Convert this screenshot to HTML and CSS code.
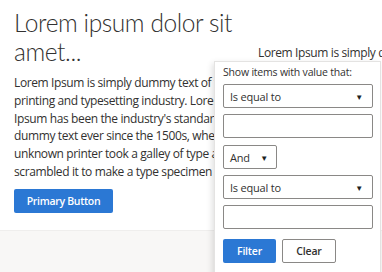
FILE: index.html
```html
<!DOCTYPE html>
<html lang="en">
<head>
    <meta charset="UTF-8">
    <title>Filter menu</title>
    <link rel="stylesheet" href="styles.css">
</head>
<body>
    <div class="page">
        <div class="columns">
            <div class="col-main">
                <h1>Lorem ipsum dolor sit amet...</h1>
                <p>Lorem Ipsum is simply dummy text of the printing and typesetting industry. Lorem Ipsum has been the industry's standard dummy text ever since the 1500s, when an unknown printer took a galley of type and scrambled it to make a type specimen book.</p>
                <button class="btn-primary">Primary Button</button>
            </div>
            <div class="col-side">
                <p>Lorem Ipsum is simply dummy text</p>
            </div>
        </div>
        <div class="band"></div>
    </div>

    <!-- filter popup -->
    <div class="filter-menu">
        <div class="filter-label">Show items with value that:</div>
        <div class="select wide"><span>Is equal to</span><span class="caret">&#9660;</span></div>
        <div class="text-box"></div>
        <div class="select small"><span>And</span><span class="caret">&#9660;</span></div>
        <div class="select wide"><span>Is equal to</span><span class="caret">&#9660;</span></div>
        <div class="text-box"></div>
        <div class="actions">
            <button class="btn-filter">Filter</button>
            <button class="btn-clear">Clear</button>
        </div>
    </div>
</body>
</html>
```

FILE: styles.css
```css
* {
    margin: 0;
    padding: 0;
    box-sizing: border-box;
}

body {
    font-family: 'Open Sans', 'Noto Sans', sans-serif;
    color: #323130;
    background-color: #fff;
    overflow: hidden;
}

.page {
    height: 272px;
    display: flex;
    flex-direction: column;
}

.columns {
    display: flex;
    gap: 8px;
    padding: 0 0 0 14px;
    height: 230px;
}

.col-main {
    width: 236px;
    flex-shrink: 0;
    padding-top: 8px;
}

    .col-main h1 {
        font-family: 'Lato', 'Open Sans', sans-serif;
        font-size: 24.5px;
        font-weight: 300;
        letter-spacing: -0.4px;
        line-height: 29px;
        margin-bottom: 8px;
    }

    .col-main p {
        width: 245px;
        font-size: 12px;
        letter-spacing: -0.38px;
        line-height: 17.8px;
    }

.col-side {
    padding-top: 44px;
    white-space: nowrap;
    font-size: 12px;
    letter-spacing: -0.38px;
    line-height: 17.8px;
}

.btn-primary {
    margin-top: 8px;
    width: 99px;
    height: 24px;
    border: none;
    border-radius: 2px;
    background-color: #2b78d4;
    color: #fff;
    font-family: inherit;
    font-size: 10.5px;
    font-weight: 600;
    letter-spacing: -0.3px;
}

.band {
    flex: 1;
    background-color: #f8f7f6;
    border-top: 1px solid #efeeed;
}

.filter-menu {
    position: absolute;
    left: 214px;
    top: 61px;
    width: 167px;
    height: 230px;
    background-color: #fff;
    border: 1px solid #e4e3e2;
    box-shadow: -2px 2px 6px rgba(0, 0, 0, 0.12);
    padding: 2px 0 0 8px;
    display: flex;
    flex-direction: column;
    gap: 6px;
}

.filter-label {
    font-size: 10.5px;
    letter-spacing: -0.2px;
    line-height: 16px;
    margin-bottom: -2px;
}

.select {
    height: 24px;
    border: 1px solid #8a8886;
    border-radius: 2px;
    display: flex;
    align-items: center;
    justify-content: space-between;
    padding: 0 9px 0 6px;
    font-size: 11px;
    letter-spacing: -0.2px;
}

    .select.wide {
        width: 150px;
    }

    .select.small {
        width: 54px;
        padding-right: 8px;
        margin-top: 1px;
    }

.caret {
    font-size: 8px;
    color: #201f1e;
}

.text-box {
    width: 150px;
    height: 24px;
    border: 1px solid #8a8886;
    border-radius: 2px;
}

.actions {
    display: flex;
    gap: 6px;
    margin-top: 4px;
}

    .actions button {
        height: 24px;
        border-radius: 2px;
        font-family: inherit;
        font-size: 10.5px;
        font-weight: 600;
        letter-spacing: -0.2px;
    }

.btn-filter {
    width: 53px;
    border: none;
    background-color: #2b78d4;
    color: #fff;
}

.btn-clear {
    width: 54px;
    border: 1px solid #8a8886;
    background-color: #fff;
    color: #323130;
}
```
